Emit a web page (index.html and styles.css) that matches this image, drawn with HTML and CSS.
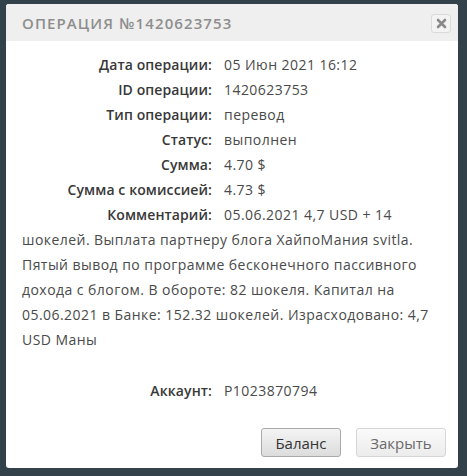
FILE: index.html
```html
<!DOCTYPE html>
<html lang="ru">
<head>
  <meta charset="UTF-8" />
  <title>Операция</title>
  <link rel="stylesheet" href="styles.css">
</head>
<body>
  <div class="modal">
    <div class="modal-head">
      <div class="modal-title">Операция №1420623753</div>
      <button class="close-btn" aria-label="Закрыть">
        <svg width="11" height="11" viewBox="0 0 11 11"><path d="M2 2 L9 9 M9 2 L2 9" stroke="#8a8a8a" stroke-width="2.6" stroke-linecap="round"/></svg>
      </button>
    </div>
    <div class="modal-body">
      <div class="row"><span class="label">Дата операции:</span><span class="val">05 Июн 2021 16:12</span></div>
      <div class="row"><span class="label">ID операции:</span><span class="val">1420623753</span></div>
      <div class="row"><span class="label">Тип операции:</span><span class="val">перевод</span></div>
      <div class="row"><span class="label">Статус:</span><span class="val">выполнен</span></div>
      <div class="row"><span class="label">Сумма:</span><span class="val">4.70 $</span></div>
      <div class="row"><span class="label">Сумма с комиссией:</span><span class="val">4.73 $</span></div>
      <div class="row"><span class="label">Комментарий:</span><span class="val">05.06.2021 4,7 USD + 14 шокелей. Выплата партнеру блога ХайпоМания svitla. Пятый вывод по программе бесконечного пассивного дохода с блогом. В обороте: 82 шокеля. Капитал на 05.06.2021 в Банке: 152.32 шокелей. Израсходовано: 4,7 USD Маны</span></div>
      <div class="row account"><span class="label">Аккаунт:</span><span class="val">P1023870794</span></div>
    </div>
    <div class="modal-foot">
      <button class="btn btn-main">Баланс</button>
      <button class="btn btn-light">Закрыть</button>
    </div>
  </div>
</body>
</html>
```

FILE: styles.css
```css
* { box-sizing: border-box; }
body {
  margin: 0;
  padding: 4px 9px 0 6px;
  background: #33414a;
  font-family: "Open Sans", sans-serif;
  height: 100vh;
}
.modal {
  background: #fff;
  border-radius: 3px;
  overflow: hidden;
  width: 452px;
}
.modal-head {
  background: #efefef;
  height: 37px;
  display: flex;
  align-items: center;
  justify-content: space-between;
  padding: 1px 7px 0 16px;
}
.modal-title {
  text-transform: uppercase;
  font-size: 15px;
  font-weight: 600;
  letter-spacing: 1.1px;
  color: #8e8e8e;
}
.close-btn {
  width: 20px; height: 19px;
  padding: 0;
  border: 1px solid #dadada;
  border-radius: 3px;
  background: #f3f3f3;
  display: flex;
  align-items: center;
  justify-content: center;
  cursor: pointer;
}
.modal-body {
  padding: 11px 18px 0 16px;
  font-size: 14px;
  line-height: 25px;
  letter-spacing: 0.45px;
  color: #4a4a4a;
}
.label {
  display: inline-block;
  width: 190px;
  margin-right: 12px;
  text-align: right;
  color: #383838;
  font-weight: 600;
  letter-spacing: 0.1px;
}
.account { margin-top: 26px; }
.modal-foot {
  display: flex;
  justify-content: flex-end;
  gap: 15px;
  padding: 25px 12px 11px;
}
.btn {
  height: 29px;
  border-radius: 3px;
  font-family: "Open Sans", sans-serif;
  font-size: 15px;
  cursor: pointer;
}
.btn-main {
  width: 80px;
  border: 1px solid #a9a9a9;
  background: linear-gradient(#f4f4f4, #dcdcdc);
  color: #333;
}
.btn-light {
  width: 90px;
  border: 1px solid #d6d6d6;
  background: linear-gradient(#fafafa, #ececec);
  color: #6a6a6a;
}
```
